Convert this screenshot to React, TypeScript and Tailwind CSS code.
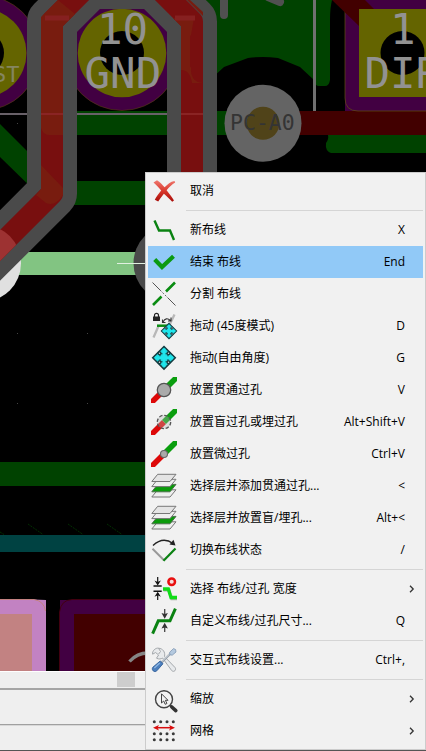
import React from "react";

type IconProps = { children: React.ReactNode };

function Icon({ children }: IconProps) {
  return (
    <svg className="size-[26px] shrink-0 overflow-visible" viewBox="0 0 26 26" fill="none">
      {children}
    </svg>
  );
}

function CancelIcon() {
  return (
    <Icon>
      <defs>
        <linearGradient id="cancelFill" x1="0" y1="0" x2="0" y2="1">
          <stop offset="0" stopColor="#f07a70" />
          <stop offset="0.5" stopColor="#d8382c" />
          <stop offset="1" stopColor="#a80c08" />
        </linearGradient>
      </defs>
      <path
        d="M2.5 4.5 6 2.2C9 4 11.5 6.700 13.600 9.300 16.500 6.300 19.500 3.600 23.500 3L24.200 4.600C21 6.500 18 9.200 15.600 12.200 18.500 15.800 21 19 23 22.500L21.200 23.800C18.300 20.800 15.500 18 12.900 15.800 10.700 18.600 8.800 21.200 7.200 23.600L3.800 21.800C5.500 18.600 7.800 15.600 10.200 12.600 8 10 5.500 7 2.500 4.500Z"
        fill="url(#cancelFill)"
      />
    </Icon>
  );
}

function NewTrackIcon() {
  return (
    <Icon>
      <path d="M3.500 3.500 8 13.500H19L23 23" stroke="#0a8212" strokeWidth="2.400" />
    </Icon>
  );
}

function FinishIcon() {
  return (
    <Icon>
      <path d="M3.700 10.500 11 18 22.500 7.300" stroke="#0a9a12" strokeWidth="4.200" />
    </Icon>
  );
}

function SplitIcon() {
  return (
    <Icon>
      <path d="M1.500 1.500 9 9M17 17l7.500 7.500" stroke="#555" strokeWidth="1" />
      <path d="M9 9l8 8" stroke="#666" strokeWidth="1" strokeDasharray="2 1.500" />
      <path d="M2 24 10.500 15.500M15 10.500 24 1.500" stroke="#0a8c12" strokeWidth="2.600" />
    </Icon>
  );
}

function MoveShape() {
  return (
    <g>
      <path d="M0-11.300 11.300 0 0 11.300-11.300 0Z" fill="#1fd9e0" stroke="#143c40" strokeWidth="1.500" />
      <path d="M-4-4H4V4H-4Z" fill="none" stroke="#143c40" strokeWidth="1.100" />
      <path d="M0-9V9M-9 0H9" stroke="#1fe6ec" strokeWidth="3" />
      <g fill="#d8d8d8" stroke="#143c40" strokeWidth="1.300">
        <circle cx="-4.500" cy="-4.500" r="1.400" />
        <circle cx="4.500" cy="-4.500" r="1.400" />
        <circle cx="-4.500" cy="4.500" r="1.400" />
        <circle cx="4.500" cy="4.500" r="1.400" />
      </g>
    </g>
  );
}

function Drag45Icon() {
  return (
    <Icon>
      <path d="M2.500 24.500 7.500 13M23.500 1.500 18.500 12" stroke="#b8b8b8" strokeWidth="2.300" />
      <path d="M6 12.700H17" stroke="#0a8c12" strokeWidth="2.500" />
      <path d="M2 3.500H9V8H2Z" fill="#222" />
      <path d="M3.500 4V2.300a2 2 0 0 1 4 0V4" stroke="#222" strokeWidth="1.200" />
      <path d="M12 9Q15 3.500 19.500 7.500M11.500 6.500v3h3M20 4.500v3.500h-3" stroke="#333" strokeWidth="1.100" />
      <g transform="translate(18 18) scale(.68)">
        <MoveShape />
      </g>
    </Icon>
  );
}

function DragFreeIcon() {
  return (
    <Icon>
      <g transform="translate(13 12.800)">
        <MoveShape />
      </g>
    </Icon>
  );
}

function ViaTrack() {
  return (
    <g>
      <clipPath id="iconBox">
        <path d="M0 0H26V26H0Z" />
      </clipPath>
      <g clipPath="url(#iconBox)">
        <path d="M-1 27 13 13" stroke="#dd0808" strokeWidth="5.600" />
        <path d="M13 13 27-1" stroke="#0a9e0e" strokeWidth="5.600" />
      </g>
    </g>
  );
}

function ThroughViaIcon() {
  return (
    <Icon>
      <ViaTrack />
      <circle cx="13" cy="13" r="6.700" fill="#aaa" stroke="#555" strokeWidth="1.300" />
    </Icon>
  );
}

function BlindViaIcon() {
  return (
    <Icon>
      <ViaTrack />
      <circle cx="13" cy="13" r="6.700" fill="#b8b8b8" fillOpacity=".35" stroke="#555" strokeWidth="1.300" strokeDasharray="3.500 1.760" />
    </Icon>
  );
}

function MicroViaIcon() {
  return (
    <Icon>
      <ViaTrack />
      <circle cx="13" cy="13" r="3.500" fill="#aaa" stroke="#666" strokeWidth="1.100" />
    </Icon>
  );
}

function LayersIcon() {
  return (
    <Icon>
      <g stroke="#777" strokeWidth="1" fill="#eee">
        <path d="M6.700 16.800H25L19 24H.8Z" />
        <path d="M6.700 11.400H25L19 18.800H.8Z" fill="#0a9a0a" stroke="#4a704a" />
        <path d="M6.700 6.300H25L19 13.600H.8Z" />
        <path d="M6.700 1.300H25L19 8.500H.8Z" fill="#e4e4e4" />
      </g>
    </Icon>
  );
}

function SwitchPostureIcon() {
  return (
    <Icon>
      <path d="M2 8.500Q12-1 22 6.500" stroke="#222" strokeWidth="1.400" />
      <path d="M24.500 8.500 18.500 7.500 22.500 2.800Z" fill="#222" />
      <path d="M1.500 11.700 13 23.300" stroke="#999" strokeWidth="2" />
      <path d="M12.500 23.800 24.500 11.500" stroke="#0a8212" strokeWidth="2.200" />
    </Icon>
  );
}

function TrackWidthIcon() {
  return (
    <Icon>
      <path d="M2.500 10H10.700M2.500 15.300H10.700" stroke="#111" strokeWidth="1.500" />
      <path d="M6.700 1V8M6.700 24V17" stroke="#111" strokeWidth="1.200" />
      <path d="M3.500 4.500 6.700 6 9.900 4.500 6.700 9.500ZM3.500 20.800 6.700 19.300 9.900 20.800 6.700 15.800Z" fill="#111" />
      <path d="M12.500 14H18L20.800 22.700H26" stroke="#a8b0a8" strokeWidth="3" />
      <path d="M12 13H17.300L20 21.500H26" stroke="#10dc18" strokeWidth="3.300" />
      <circle cx="20.700" cy="5.700" r="3.300" fill="#f6dcdc" stroke="#e81010" strokeWidth="2.500" />
    </Icon>
  );
}

function CustomSizeIcon() {
  return (
    <Icon>
      <path d="M2.200 24.300 7.300 12.800H19L23.800 2" stroke="#0a8212" strokeWidth="3" strokeLinecap="square" />
      <path d="M13.700 1V8M13.700 24V17" stroke="#444" strokeWidth="1.300" />
      <path d="M10.500 5 13.700 6 16.900 5 13.700 10.700ZM10.500 20.400 13.700 19.400 16.900 20.400 13.700 14.700Z" fill="#333" />
    </Icon>
  );
}

function SettingsIcon() {
  return (
    <Icon>
      <path
        d="M7.500 1.200C4.500.6 1 4 1.600 7.200L4.600 5.500 7.600 8 5.500 11.200C8 12.500 10 12 11.500 11L20.500 23.300C22.500 26 26 23 24 20.500L13.500 9.500C14.500 5 11.800 1.500 7.500 1.200L9.500 4.500 7.600 7"
        fill="#e8eaec"
        stroke="#a4a8ac"
        strokeWidth="1"
      />
      <path d="M10.500 15.500 20 6" stroke="#929ba5" strokeWidth="2.200" />
      <path d="M10.800 14.700 19.500 6" stroke="#dfe5eb" strokeWidth="1" />
      <path d="M18.700 5.200 22.500 1.600 24.600 2.500 25 5 21.200 8.200 18.800 7.700Z" fill="#b4c9df" stroke="#8097b2" strokeWidth=".8" />
      <path d="M9.200 14 12 16.700 5.800 23.800C3.500 26 0 23 1.800 20.300Z" fill="#4c7fbd" stroke="#2f5d98" strokeWidth=".9" />
      <path d="M3.300 21 8.800 16" stroke="#8fb6e2" strokeWidth="1.300" />
    </Icon>
  );
}

function ZoomIcon() {
  return (
    <Icon>
      <circle cx="13" cy="13.300" r="8.500" fill="#f3f3f3" stroke="#444" strokeWidth="1.400" />
      <path d="M19 19.300 21 21.300" stroke="#444" strokeWidth="2" />
      <path d="M20.800 21 24.800 24.600" stroke="#333" strokeWidth="3.600" strokeLinecap="round" />
      <path d="M10.500 7.800V17L12.700 15 14.200 18.300 15.900 17.500 14.400 14.300H17Z" stroke="#444" strokeWidth="1" />
    </Icon>
  );
}

function GridIcon() {
  const columns = [3.300, 9.700, 16, 22.300];
  const rows = [3.700, 15.700, 21.700];
  return (
    <Icon>
      {rows.map((y) => columns.map((x) => <circle key={`${x}-${y}`} cx={x} cy={y} r="1.500" fill="#3a3a3a" />))}
      <path d="M5 9.700H21" stroke="#d80c0c" strokeWidth="1.500" />
      <path d="M2 9.700 8 6.900 6.500 9.700 8 12.500ZM24 9.700 18 6.900 19.500 9.700 18 12.500Z" fill="#d80c0c" />
    </Icon>
  );
}

type Entry = {
  label: string;
  icon: React.ReactNode;
  shortcut?: string;
  submenu?: boolean;
  active?: boolean;
};

const groups: Entry[][] = [
  [{ label: "取消", icon: <CancelIcon /> }],
  [
    { label: "新布线", icon: <NewTrackIcon />, shortcut: "X" },
    { label: "结束 布线", icon: <FinishIcon />, shortcut: "End", active: true },
    { label: "分割 布线", icon: <SplitIcon /> },
    { label: "拖动 (45度模式)", icon: <Drag45Icon />, shortcut: "D" },
    { label: "拖动(自由角度)", icon: <DragFreeIcon />, shortcut: "G" },
    { label: "放置贯通过孔", icon: <ThroughViaIcon />, shortcut: "V" },
    { label: "放置盲过孔或埋过孔", icon: <BlindViaIcon />, shortcut: "Alt+Shift+V" },
    { label: "放置微过孔", icon: <MicroViaIcon />, shortcut: "Ctrl+V" },
    { label: "选择层并添加贯通过孔...", icon: <LayersIcon />, shortcut: "<" },
    { label: "选择层并放置盲/埋孔...", icon: <LayersIcon />, shortcut: "Alt+<" },
    { label: "切换布线状态", icon: <SwitchPostureIcon />, shortcut: "/" },
  ],
  [
    { label: "选择 布线/过孔 宽度", icon: <TrackWidthIcon />, submenu: true },
    { label: "自定义布线/过孔尺寸...", icon: <CustomSizeIcon />, shortcut: "Q" },
  ],
  [{ label: "交互式布线设置...", icon: <SettingsIcon />, shortcut: "Ctrl+," }],
  [
    { label: "缩放", icon: <ZoomIcon />, submenu: true },
    { label: "网格", icon: <GridIcon />, submenu: true },
  ],
];

function MenuRow({ entry }: { entry: Entry }) {
  return (
    <div className={`flex h-8 items-center pl-[3px] ${entry.active ? "bg-[#91c9f7]" : ""}`}>
      {entry.icon}
      <span className="ml-[13px] flex-1 whitespace-pre">{entry.label}</span>
      {entry.shortcut && <span className="mr-[18px] whitespace-pre">{entry.shortcut}</span>}
      {entry.submenu && (
        <svg className="mr-[8px] h-[8px] w-[6px]" viewBox="0 0 6 8" fill="none">
          <path d="M1 .8 4.200 4 1 7.200" stroke="#333" strokeWidth="1.300" />
        </svg>
      )}
    </div>
  );
}

function ContextMenu() {
  return (
    <div className="absolute top-[172px] left-[145px] h-[578px] w-[281px] border border-[#ccc] bg-[#f1f1f1] p-[2px] font-['Open_Sans','Noto_Sans_CJK_SC',sans-serif] text-[12px] leading-4 text-black">
      {groups.map((group, index) => (
        <React.Fragment key={index}>
          {index > 0 && <div className="my-[3px] ml-[38px] h-px bg-[#d5d5d5]" />}
          {group.map((entry) => (
            <MenuRow key={entry.label} entry={entry} />
          ))}
        </React.Fragment>
      ))}
    </div>
  );
}

const trackPath = "M-40 285.500 52 193.500V21.500L89.500-16H154.500L192 21.500V200";

function BoardCanvas() {
  return (
    <svg className="block h-[671px] w-[426px] bg-black" viewBox="0 0 426 671" fill="none">
      <defs>
        <clipPath id="trackCore">
          <path d="M41 0H203V190H63V198L0 261V230L41 189Z" />
        </clipPath>
      </defs>

      <g fill="#004200">
        <path d="M0 124 40 164V196L0 157Z" />
        <path d="M60 111H260V135H60ZM60 181H200V205H60ZM0 462H150V486H0Z" />
        <path d="M205 0H332Q330 8 330 20V80Q329 86 325 86H319Q315 86 314 80L300 67 278 58Q263 56 248 58L224 67 212 78Z" />
        <path d="M328 135H426V153H331Q325 151 326 143Q329 139 328 135Z" />
      </g>
      <path d="M0 535H150V552H0Z" fill="#004242" />
      <path d="M28 524 43 534.500M68 524 83 534.500M107 524 122 534.500M0 532 4 534.500" stroke="#003000" strokeDasharray="2 1" />

      <circle cx="-18" cy="53" r="57.500" fill="#420042" stroke="#5a4010" strokeWidth=".6" />
      <circle cx="-18" cy="53" r="44.500" fill="#646400" />
      <circle cx="-18" cy="53" r="22" fill="#000" />
      <circle cx="122" cy="53" r="57.500" fill="#420042" stroke="#5a4010" strokeWidth=".6" />
      <circle cx="122" cy="53" r="44.300" fill="#646400" />
      <circle cx="122" cy="53" r="22" fill="#000" />

      <path d="M270 111H426V135H270Z" fill="#420000" />
      <path d="M345 0H426V111H345Z" fill="#420042" />
      <path d="M345 0V98Q345 111 358 111H426" stroke="#605010" strokeWidth=".7" />
      <path d="M332 0H365L380 15 359 26Z" fill="#420000" />
      <path d="M359 9H426V97H359Z" fill="#646400" />
      <circle cx="402.500" cy="53" r="22" fill="#000" />

      <path d="M0 114H170" stroke="#686068" strokeWidth="2" />
      <path d="M314.500 0V111" stroke="#707070" strokeWidth="3" />
      <path d="M224 -5V15M268-3 280 2" stroke="#505050" strokeWidth="8" strokeLinecap="round" />

      <circle cx="263" cy="123.300" r="38.500" fill="#646464" />
      <circle cx="263" cy="123.300" r="16.500" fill="#504319" />

      <path d="M10 252H150V275H10Z" fill="#82c482" />
      <circle cx="-17.500" cy="263.300" r="38.500" fill="#e0e0e0" />
      <circle cx="172" cy="263.300" r="38.500" fill="#4a4a4a" />
      <path d="M117 263.500H146" stroke="#e0f0e0" />

      <path d={trackPath} stroke="#4a4a4a" strokeWidth="50" strokeLinejoin="round" />
      <path d={trackPath} stroke="#780f0f" strokeWidth="22" strokeLinejoin="round" />
      <g clipPath="url(#trackCore)">
        <path d="M41 17 58 0 75 14 63 26V135H49Q43 135 41 128ZM41 165 63 188V195Q55 207 46 203L36 195 41 189Z" fill="#781c0f" />
        <path d="M181 26 173 18H194L191 35Q188 40 181 36V70L191 67Q190 82 203 83V16L187 0H190L203 12V83H192Q190 70 181 70Z" fill="#781c0f" />
        <path d="M181 28H190V70H181Z" fill="#781c0f" />
        <path d="M41 114H63M181 114H203" stroke="#8a2424" strokeWidth="2" />
        <path d="M45 18H69M175 18H195" stroke="#862020" strokeWidth="5" />
        <circle cx="-17.500" cy="263.300" r="38.500" fill="#9d3232" />
      </g>

      <g fill="#929292" fontFamily="'DejaVu Sans Mono', monospace" fontSize="42.500">
        <text x="97" y="44">10</text>
        <text x="84.500" y="88">GND</text>
        <text x="390" y="44">1</text>
        <text x="364.500" y="88">DIR</text>
        <text x="-7" y="82" fontSize="22" fill="#858560">ST</text>
        <text x="230" y="130" fontSize="21.500" fill="#343434">PC-A0</text>
      </g>

      <path d="M17 123h1v1h-1zM17 333h1v1h-1zM87 333h1v1h-1zM17 403h1v1h-1zM87 403h1v1h-1z" fill="#444" />

      <path d="M0 599.500H34L46 600V671H0Z" fill="#c282c2" />
      <path d="M0 599.500H34Q44 601 45.500 611" stroke="#c48282" />
      <path d="M0 614H32V671H0Z" fill="#c28282" />
      <path d="M60 600H150V671H60Z" fill="#420042" />
      <path d="M59.500 671V612Q61 600 72 599.500H150" stroke="#420010" />
      <path d="M74 614H150V671H74Z" fill="#420000" />
      <path d="M129.500 661.500Q137 653 148 653" stroke="#858585" strokeWidth="3.300" />
    </svg>
  );
}

export default function App() {
  return (
    <div className="relative flex h-[751px] w-[426px] flex-col overflow-hidden bg-[#efefef]">
      <BoardCanvas />
      <div className="flex h-[17px] border-t border-white pl-[117px]">
        <div className="h-[15px] w-[18px] bg-[#cdcdcd]" />
      </div>
      <div className="h-[2px] bg-[#a5a5a5]" />
      <div className="h-[34px]" />
      <div className="h-[2px] border-t border-[#a0a0a0] bg-[#d8d8d8]" />
      <div className="h-[24px]" />
      <div className="h-px bg-[#555]" />
      <ContextMenu />
    </div>
  );
}
